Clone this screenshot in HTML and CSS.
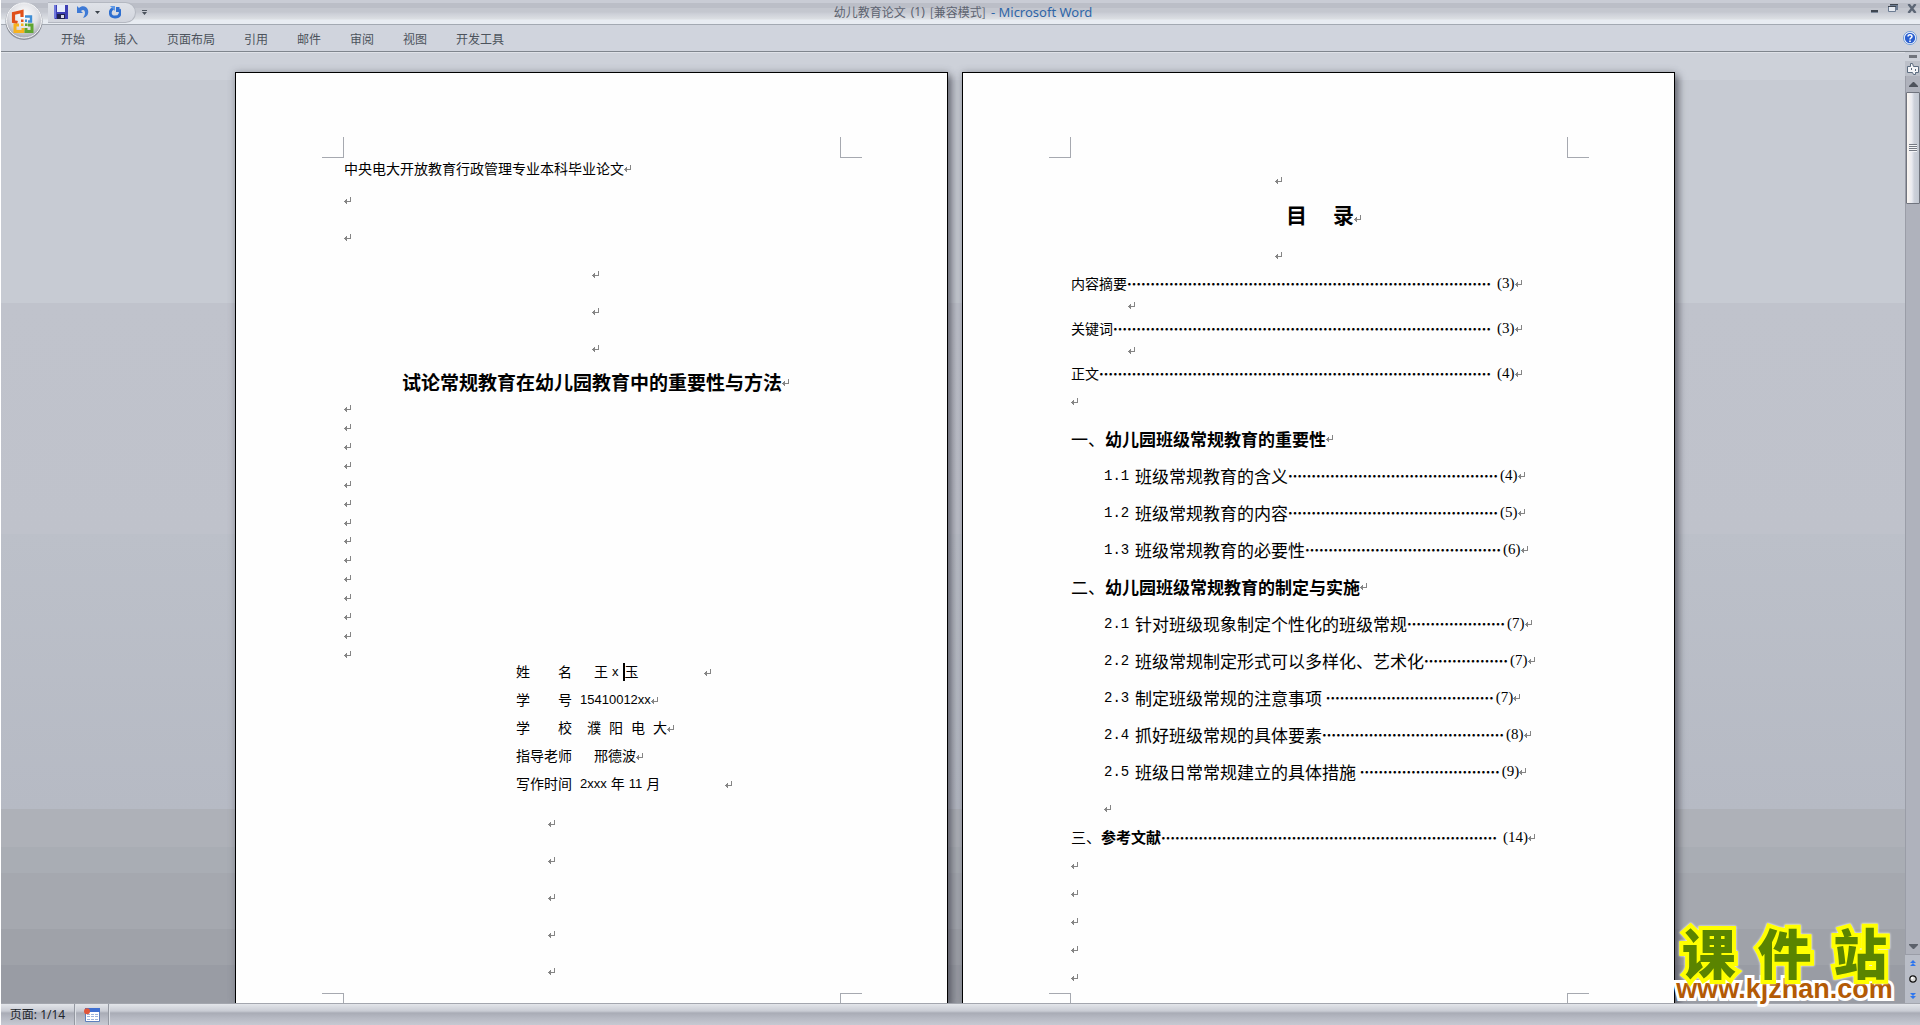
FILE: index.html
```html
<!DOCTYPE html>
<html lang="zh-CN">
<head>
<meta charset="utf-8">
<title>幼儿教育论文 (1) [兼容模式] - Microsoft Word</title>
<link rel="stylesheet" href="styles.css">
</head>
<body>
<svg class="defs" aria-hidden="true">
  <symbol id="ret" viewBox="0 0 7 7"><path d="M6 0h1v5H3v2H2V6H1V5H0V4h1V3h1V2h1v2h3z" fill="#858585"/></symbol>
</svg>

<header class="titlebar">
  <div class="qat">
    <button aria-label="保存"><svg width="14" height="14" viewBox="0 0 14 14"><path d="M0 0h14v14H1L0 13z" fill="#3d3fb4"/><path d="M3 0h8v7H3z" fill="#e6ecfb"/><path d="M0 0h2v13H0z" fill="#6f78dc"/><path d="M3 9h8v5H3z" fill="#22244f"/><path d="M7 10h3v3H7z" fill="#d8d8e8"/></svg></button>
    <button class="undo" aria-label="撤消"><svg width="12" height="14" viewBox="0 0 12 14"><path d="M0 1v7h6L4 6c2-2 4-1 4 2 0 2-1 3-2 5 4-1 6-4 5-8C10 1 5 0 2 3z" fill="#3e7ad6"/></svg></button>
    <button class="caret" aria-label="撤消列表"><svg width="5" height="3" viewBox="0 0 5 3"><path d="M0 0h5L2.500 3z" fill="#3c434c"/></svg></button>
    <button aria-label="重复"><svg width="12" height="13" viewBox="0 0 12 13"><path d="M7 1v5h5l-1.500-1.500V1z" fill="#2f6fd0"/><path d="M4.500 2.500C0 4 0 11 6 11s6-6 4-7.500" fill="none" stroke="#2f6fd0" stroke-width="2.800"/><path d="M1 0h5v5z" fill="#5c98e8"/></svg></button>
  </div>
  <button class="more" aria-label="自定义快速访问工具栏"><svg width="5" height="5" viewBox="0 0 5 5"><path d="M0 0h5v1H0zM0 2h5L2.500 5z" fill="#4a515b"/></svg></button>
  <h1 class="caption"><span>幼儿教育论文</span><span class="lat">(1)</span><span class="mode">[兼容模式]</span><span class="app">- Microsoft Word</span></h1>
  <div class="winbtns">
    <button aria-label="最小化"><svg width="8" height="9" viewBox="0 0 8 9"><path d="M0 6h7v2H0z" fill="#3f4650"/><path d="M0 8h7v1H0z" fill="#7c8899"/></svg></button>
    <button aria-label="还原"><svg width="10" height="9" viewBox="0 0 10 9"><path d="M2 0h8v6H8V3H2z" fill="#6d7c92"/><path d="M.5 2.500h7v5h-7z" fill="#e6eaf1" stroke="#6d7c92"/><path d="M2 0h8v1H2zM0 2h8v1H0z" fill="#3f4650"/></svg></button>
    <button aria-label="关闭"><svg width="10" height="9" viewBox="0 0 10 9"><path d="M1.500 0L8.500 9M8.500 0L1.500 9" stroke="#5c6675" stroke-width="2.400"/></svg></button>
  </div>
</header>

<nav class="ribbon">
  <button>开始</button><button>插入</button><button>页面布局</button><button>引用</button><button>邮件</button><button>审阅</button><button>视图</button><button>开发工具</button>
  <button class="help" aria-label="帮助"><svg width="14" height="14" viewBox="0 0 14 14"><circle cx="7" cy="7" r="6.500" fill="#fff" stroke="#6f9ad6"/><circle cx="7" cy="7" r="5.200" fill="#2a5fd0"/><path d="M5 5.500c0-2.500 4-2.500 4 0C9 7 7 6.800 7 8.500" fill="none" stroke="#fff" stroke-width="1.500"/><path d="M6.200 9.600h1.600v1.500H6.200z" fill="#fff"/></svg></button>
</nav>

<button class="orb" aria-label="Office 按钮"><svg width="40" height="40" viewBox="0 0 40 40">
  <defs><radialGradient id="og" cx=".5" cy=".35" r=".65"><stop offset="0" stop-color="#fff"/><stop offset=".6" stop-color="#e0e1e6"/><stop offset="1" stop-color="#a6a9b2"/></radialGradient></defs>
  <circle cx="20" cy="20.500" r="18.500" fill="#8d919a"/><circle cx="20" cy="19.500" r="17.500" fill="url(#og)" stroke="#f6f7f9"/>
  <g fill="none">
    <path d="M18 16v-5.500l-8.500 2v8l4 1" stroke="#e0501a" stroke-width="3.200"/>
    <path d="M21 15.500h6v5h-3" stroke="#3f8ed6" stroke-width="2.400"/>
    <path d="M15 24h-4v6.500h8V27" stroke="#f6b21e" stroke-width="3"/>
    <path d="M24 24h4v6.500h-6V27" stroke="#5ea531" stroke-width="3"/>
  </g>
  <path d="M17 18.500h2.500V21H17z" fill="#e0501a"/><path d="M21 18.500h2V21h-2z" fill="#3f8ed6"/><path d="M17 22.500h2.500V25H17z" fill="#f6b21e"/><path d="M21 22.500h2.500V25H21z" fill="#5ea531"/>
</svg></button>

<main class="workspace">
  <div class="desk">
    <article class="page">
      <div class="corners top"><i></i><i></i></div>
      <p class="l20 after4">中央电大开放教育行政管理专业本科毕业论文<svg class="ret"><use href="#ret"/></svg></p>
      <p class="l37"><svg class="ret"><use href="#ret"/></svg></p>
      <p class="l37"><svg class="ret"><use href="#ret"/></svg></p>
      <p class="l37 center"><svg class="ret"><use href="#ret"/></svg></p>
      <p class="l37 center"><svg class="ret"><use href="#ret"/></svg></p>
      <p class="l37 center"><svg class="ret"><use href="#ret"/></svg></p>
      <h2 class="thesis center">试论常规教育在幼儿园教育中的重要性与方法<svg class="ret"><use href="#ret"/></svg></h2>
      <div class="blanks">
        <svg class="ret"><use href="#ret"/></svg><svg class="ret"><use href="#ret"/></svg><svg class="ret"><use href="#ret"/></svg><svg class="ret"><use href="#ret"/></svg><svg class="ret"><use href="#ret"/></svg><svg class="ret"><use href="#ret"/></svg><svg class="ret"><use href="#ret"/></svg><svg class="ret"><use href="#ret"/></svg><svg class="ret"><use href="#ret"/></svg><svg class="ret"><use href="#ret"/></svg><svg class="ret"><use href="#ret"/></svg><svg class="ret"><use href="#ret"/></svg><svg class="ret"><use href="#ret"/></svg><svg class="ret"><use href="#ret"/></svg>
      </div>
      <dl class="fields">
        <div><dt><span>姓</span><span>名</span></dt><dd class="in3 sp4"><span>王</span><span class="latin">x</span><span class="cursor">玉</span><svg class="ret far"><use href="#ret"/></svg></dd></div>
        <div><dt><span>学</span><span>号</span></dt><dd class="in1"><span class="latin">15410012xx</span><svg class="ret"><use href="#ret"/></svg></dd></div>
        <div><dt><span>学</span><span>校</span></dt><dd class="in2 sp8"><span>濮</span><span>阳</span><span>电</span><span>大<svg class="ret"><use href="#ret"/></svg></span></dd></div>
        <div><dt>指导老师</dt><dd class="in3">邢德波<svg class="ret"><use href="#ret"/></svg></dd></div>
        <div><dt>写作时间</dt><dd class="in1 sp4"><span class="latin">2xxx</span><span>年</span><span class="latin">11</span><span>月</span><svg class="ret far"><use href="#ret"/></svg></dd></div>
      </dl>
      <p class="l37 mid"><svg class="ret"><use href="#ret"/></svg></p>
      <p class="l37 mid"><svg class="ret"><use href="#ret"/></svg></p>
      <p class="l37 mid"><svg class="ret"><use href="#ret"/></svg></p>
      <p class="l37 mid"><svg class="ret"><use href="#ret"/></svg></p>
      <p class="l37 mid"><svg class="ret"><use href="#ret"/></svg></p>
      <div class="corners bottom"><i></i><i></i></div>
    </article>

    <article class="page">
      <div class="corners top"><i></i><i></i></div>
      <p class="l37 mid before4"><svg class="ret"><use href="#ret"/></svg></p>
      <h2 class="toc-title"><span>目</span><span>录<svg class="ret"><use href="#ret"/></svg></span></h2>
      <p class="l35 mid before9"><svg class="ret"><use href="#ret"/></svg></p>
      <p class="l20 toc"><span>内容摘要</span><span class="dots">……………………………………………………………………</span><span class="num">(3)</span><svg class="ret"><use href="#ret"/></svg></p>
      <p class="l25 tab4"><svg class="ret"><use href="#ret"/></svg></p>
      <p class="l20 toc"><span>关键词</span><span class="dots">………………………………………………………………………</span><span class="num">(3)</span><svg class="ret"><use href="#ret"/></svg></p>
      <p class="l25 tab4"><svg class="ret"><use href="#ret"/></svg></p>
      <p class="l20 toc"><span>正文</span><span class="dots">…………………………………………………………………………</span><span class="num">(4)</span><svg class="ret"><use href="#ret"/></svg></p>
      <p class="l37"><svg class="ret"><use href="#ret"/></svg></p>
      <h3 class="l37"><span class="ord">一、</span>幼儿园班级常规教育的重要性<svg class="ret"><use href="#ret"/></svg></h3>
      <p class="l37 toc sub"><span class="sec">1.1</span><span class="name">班级常规教育的含义</span><span class="dots">………………………………………</span><span class="num">(4)</span><svg class="ret"><use href="#ret"/></svg></p>
      <p class="l37 toc sub"><span class="sec">1.2</span><span class="name">班级常规教育的内容</span><span class="dots">………………………………………</span><span class="num">(5)</span><svg class="ret"><use href="#ret"/></svg></p>
      <p class="l37 toc sub"><span class="sec">1.3</span><span class="name">班级常规教育的必要性</span><span class="dots">……………………………………</span><span class="num">(6)</span><svg class="ret"><use href="#ret"/></svg></p>
      <h3 class="l37"><span class="ord">二、</span>幼儿园班级常规教育的制定与实施<svg class="ret"><use href="#ret"/></svg></h3>
      <p class="l37 toc sub"><span class="sec">2.1</span><span class="name">针对班级现象制定个性化的班级常规</span><span class="dots">…………………</span><span class="num">(7)</span><svg class="ret"><use href="#ret"/></svg></p>
      <p class="l37 toc sub"><span class="sec">2.2</span><span class="name">班级常规制定形式可以多样化、艺术化</span><span class="dots">………………</span><span class="num">(7)</span><svg class="ret"><use href="#ret"/></svg></p>
      <p class="l37 toc sub"><span class="sec">2.3</span><span class="name">制定班级常规的注意事项&nbsp;</span><span class="dots">………………………………</span><span class="num">(7)</span><svg class="ret"><use href="#ret"/></svg></p>
      <p class="l37 toc sub"><span class="sec">2.4</span><span class="name">抓好班级常规的具体要素</span><span class="dots">…………………………………</span><span class="num">(8)</span><svg class="ret"><use href="#ret"/></svg></p>
      <p class="l37 toc sub"><span class="sec">2.5</span><span class="name">班级日常常规建立的具体措施&nbsp;</span><span class="dots">…………………………</span><span class="num">(9)</span><svg class="ret"><use href="#ret"/></svg></p>
      <p class="l37 sub"><svg class="ret"><use href="#ret"/></svg></p>
      <p class="l20 toc"><span class="refs"><span class="ord">三、</span>参考文献</span><span class="dots">………………………………………………………………</span><span class="num">(14)</span><svg class="ret"><use href="#ret"/></svg></p>
      <p class="l28 before4"><svg class="ret"><use href="#ret"/></svg></p>
      <p class="l28"><svg class="ret"><use href="#ret"/></svg></p>
      <p class="l28"><svg class="ret"><use href="#ret"/></svg></p>
      <p class="l28"><svg class="ret"><use href="#ret"/></svg></p>
      <p class="l28"><svg class="ret"><use href="#ret"/></svg></p>
      <div class="corners bottom"><i></i><i></i></div>
    </article>
  </div>

  <aside class="scroll">
    <div class="split"></div>
    <button class="ruler" aria-label="标尺"><svg width="12" height="12" viewBox="0 0 12 12"><path d="M.5 3.500h3v-3h2l1 3h5v6h-3v2h-2l-1-2h-5z" fill="#f4f5f8" stroke="#5c6c80"/><path d="M4 5h1v2H4zM8 6h1v2H8z" fill="#5c6c80"/></svg></button>
    <div class="track">
      <button aria-label="向上"><svg width="9" height="5" viewBox="0 0 9 5"><path d="M4 0h1l4 4v1H0V4z" fill="#4e535c"/></svg></button>
      <div class="thumb"><i></i></div>
      <button class="down" aria-label="向下"><svg width="9" height="5" viewBox="0 0 9 5"><path d="M0 0h9v1L5 5H4L0 1z" fill="#5c616b"/></svg></button>
    </div>
    <div class="browse">
      <button aria-label="前一页"><svg width="6" height="7" viewBox="0 0 6 7"><path d="M3 0l3 3H0zM3 3l3 3H0z" fill="#2e76ee"/></svg></button>
      <button aria-label="选择浏览对象"><svg width="8" height="8" viewBox="0 0 8 8"><circle cx="4" cy="4" r="3.200" fill="#d9d9d9" stroke="#111" stroke-width="1.200"/><circle cx="3.200" cy="3" r="1.200" fill="#fff"/></svg></button>
      <button aria-label="下一页"><svg width="6" height="7" viewBox="0 0 6 7"><path d="M3 4L6 1H0zM3 7l3-3H0z" fill="#2e76ee"/></svg></button>
    </div>
  </aside>
</main>

<footer class="status">
  <button class="pages">页面: 1/14</button>
  <button class="macro" aria-label="录制宏"><svg width="16" height="14" viewBox="0 0 16 14"><path d="M1.500 1.500h14v12h-14z" fill="#fff" stroke="#5d7fbd"/><path d="M1 0h15v4H1z" fill="#3f6fd0"/><path d="M3 6h3v1H3zM7 6h3v1H7zM11 6h3v1h-3zM3 8h3v1H3zM7 8h3v1H7zM11 8h3v1h-3zM3 11h3v1H3zM7 11h3v1H7zM11 11h3v1h-3z" fill="#9db4dc"/><circle cx="3" cy="3.200" r="3" fill="#e0563a"/></svg></button>
</footer>

<div class="watermark">
  <div class="cn"><span>课</span><span>件</span><span>站</span></div>
  <div class="url">www.kjzhan.com</div>
</div>
</body>
</html>
```
FILE: styles.css
```css
* { box-sizing: border-box; }

body {
  margin: 0;
  height: 100vh;
  display: flex;
  flex-direction: column;
  overflow: hidden;
  border-left: 1px solid #fff;
  font: 12px "Noto Sans CJK SC", sans-serif;
  background: #cdd1d9;
}

button {
  margin: 0;
  padding: 0;
  border: 0;
  background: none;
  font: inherit;
  color: inherit;
  display: flex;
  align-items: center;
  justify-content: center;
}

svg { display: block; flex: none; }
.defs { width: 0; height: 0; position: absolute; }
h1, h2, h3, p, dl, dd { margin: 0; }

/* title bar */
.titlebar {
  flex: none;
  height: 25px;
  display: grid;
  grid-template-columns: 88px 17px 1fr auto;
  align-items: center;
  padding: 0 2px 0 47px;
  border-bottom: 1px solid #a3a9b2;
  background: linear-gradient(#c9ccd5 0 3px, #bbbec7 3px 8px, #c4c7cf 8px 12px, #cdd0d8 14px, #dcdfe3 19px, #e8ecf2 20px 24px);
}
.qat {
  height: 21px;
  display: flex;
  align-items: center;
  padding-left: 6px;
  border: 1px solid #b4b8c1;
  border-left: 0;
  border-radius: 0 11px 11px 0;
  background: linear-gradient(#dfe2e8, #d2d5dd);
}
.qat .undo { margin-left: 9px; }
.qat .caret { margin: 0 9px 0 6px; }
.caption {
  display: flex;
  justify-content: center;
  align-items: center;
  gap: 5px;
  padding-right: 98px;
  font-size: 12px;
  font-weight: 400;
  line-height: 20px;
  color: #5d6370;
}
.caption .lat { font-family: "Noto Sans", sans-serif; }
.caption .app { font-family: "Noto Sans", sans-serif; font-size: 13px; color: #2f66a8; }
.winbtns { display: flex; gap: 9px; align-self: start; padding: 4px 1px 0 0; }

/* ribbon tabs */
.ribbon {
  height: 27px;
  flex: none;
  display: flex;
  gap: 29px;
  padding: 0 3px 0 60px;
  background: #d0d4dd;
  border-bottom: 1px solid #7f858d;
  color: #4c535c;
}
.ribbon .help { margin-left: auto; }
.orb { position: absolute; left: 4px; top: 1px; }

/* workspace */
.workspace { flex: 1; min-height: 0; display: flex; }
.desk {
  flex: 1;
  min-width: 0;
  display: flex;
  justify-content: center;
  gap: 14px;
  padding: 20px 0 0 4px;
  overflow: hidden;
  background: linear-gradient(#dfe2e8 0 1px, #cdd1d9 1px 28px, #c7cbd3 28px 251px, #c0c3cc 251px, #bfc2cb 482px, #bcc0c9 482px, #b6bac4 757px, #aeb1b8 757px 795px, #a9adb4 795px 821px, #a5a8af 821px 877px, #9fa2a9 877px 913px, #999ca4 913px);
}
.page {
  width: 713px;
  display: flex;
  flex-direction: column;
  padding: 64px 107px 0 108px;
  border: 1px solid #000;
  border-bottom: 0;
  background: #fefefe;
  box-shadow: 4px 4px 7px rgba(60, 62, 72, .6), 0 0 7px rgba(110, 112, 125, .45);
  font-size: 14px;
  color: #000;
}
.page p, .page h2, .page h3 { display: flex; align-items: center; white-space: nowrap; }

/* text-area crop marks */
.corners { display: flex; justify-content: space-between; margin: 0 -22px; }
.corners i { width: 22px; border: 0 solid #a6a9b0; }
.corners.top i { height: 21px; border-bottom-width: 1px; }
.corners.bottom { margin-top: auto; }
.corners.bottom i { height: 10px; border-top-width: 1px; }
.corners i:first-child { border-right-width: 1px; }
.corners i:last-child { border-left-width: 1px; }

/* paragraph mark */
.ret { width: 7px; height: 7px; }

/* line pitches */
.l20 { height: 20px; line-height: 20px; }
.l25 { height: 25px; line-height: 25px; }
.l28 { height: 28px; line-height: 28px; }
.l35 { height: 35px; line-height: 35px; }
.l37 { height: 37px; line-height: 37px; }
.after4 { margin-bottom: 4px; }
.before4 { margin-top: 4px; }
.before9 { margin-top: 9px; }
.mid { padding-left: 204px; }
.tab4 { padding-left: 57px; }
.center { justify-content: center; padding-left: 7px; }

.thesis { font-size: 19px; line-height: 30px; }
.blanks { height: 253px; margin-top: 8px; display: flex; flex-direction: column; justify-content: space-between; }

.fields { padding-left: 172px; margin-bottom: 7px; }
.fields div { display: flex; height: 28px; line-height: 28px; }
.fields dt { width: 56px; display: flex; justify-content: space-between; }
.fields dt, .fields dd { font-family: "Liberation Sans", "Noto Sans CJK SC", sans-serif; }
.fields dd { display: flex; align-items: center; }
.fields .latin { font-size: 13px; }
.in1 { padding-left: 8px; }
.in2 { padding-left: 15px; }
.in3 { padding-left: 22px; }
.sp4 { gap: 4px; }
.sp8 { gap: 8px; }
.sp8 span { display: flex; align-items: center; }
.fields .far { margin-left: 61px; }
.cursor { line-height: 18px; border-left: 2px solid #000; }

/* contents page */
.toc-title { padding-left: 215px; gap: 26px; font-size: 21px; line-height: 30px; }
.toc-title span { display: flex; align-items: center; }
.toc-title .ret { margin-top: 8px; }
h3 { font-size: 17px; }
.ord { font-weight: 400; }
.sub { padding-left: 33px; }
.sec { width: 31px; padding-top: 2px; font-family: "Liberation Mono", monospace; font-size: 14px; }
.name { font-size: 17px; }
.refs { font-size: 15px; font-weight: 700; }
.dots { font-weight: 900; }
.num { margin-left: 6px; font-family: "Liberation Serif", serif; font-size: 15px; }
.sub .num { margin-left: 2px; }

/* scroll bar */
.scroll { width: 15px; display: flex; flex-direction: column; background: #b9bdc7; }
.split { height: 9px; background: #cdd1d9; padding: 3px 3px 3px 4px; }
.split::before { content: ""; display: block; height: 3px; background: #70747c; }
.ruler { height: 15px; background: #bcc0c9; }
.track { flex: 1; display: flex; flex-direction: column; border: 1px solid #9a9da7; border-width: 0 0 1px 1px; background: #afb2bc; }
.track button { height: 16px; }
.track .down { margin-top: auto; }
.thumb {
  height: 112px;
  display: flex;
  align-items: center;
  justify-content: center;
  border: 1px solid #70747e;
  border-radius: 1px;
  background: linear-gradient(90deg, #fbf6f0, #e9eaf0 40%, #cdd1da 60%, #c2c8d2);
}
.thumb i { width: 8px; height: 8px; background: repeating-linear-gradient(#747983 0 1px, #f4f5f8 1px 2px); }
.browse { height: 48px; display: flex; flex-direction: column; }
.browse button { flex: 1; }

/* status bar */
.status {
  flex: none;
  height: 22px;
  display: flex;
  border-top: 1px solid #a3a6ae;
  background: linear-gradient(#e3e5ea, #c9ccd4 7px, #a9acb6 9px, #b6b9c3 14px, #c6c9d2);
  color: #22262c;
}
.status button { border-right: 1px solid #9498a1; box-shadow: 1px 0 #dcdfe5; }
.status .pages { width: 74px; padding-bottom: 2px; font-family: "Noto Sans", "Noto Sans CJK SC", sans-serif; }
.status .macro { width: 34px; }

/* site watermark laid over the window */
.watermark { position: absolute; right: 22px; bottom: 24px; width: 227px; }
.cn, .url { paint-order: stroke fill; stroke-linejoin: round; white-space: nowrap; }
.cn {
  display: flex;
  justify-content: space-around;
  font-size: 54px;
  font-weight: 900;
  line-height: 50px;
  color: #5a8400;
  -webkit-text-stroke: 8px #ffff00;
  filter: drop-shadow(0 0 1px #fff);
}
.url { font: 700 27px/24px "Liberation Sans", sans-serif; color: #b35a05; text-align: center; -webkit-text-stroke: 6px #fff; }
```
